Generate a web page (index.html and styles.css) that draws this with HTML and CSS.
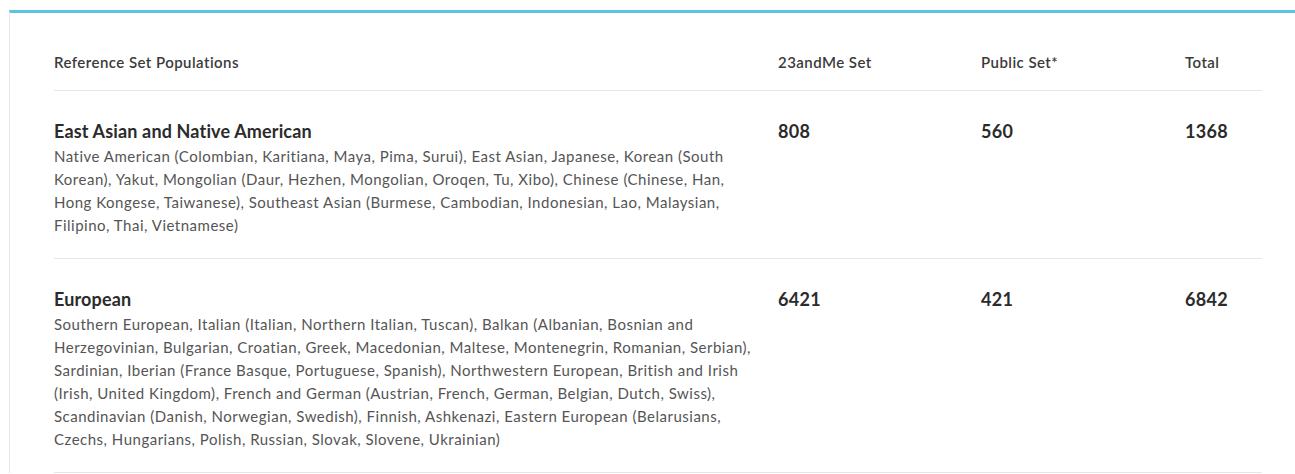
FILE: index.html
```html
<!DOCTYPE html>
<html lang="en">
<head>
    <meta charset="UTF-8">
    <meta name="viewport" content="width=device-width, initial-scale=1.0">
    <title>Reference Set Populations</title>
    <link rel="stylesheet" href="styles.css">
</head>
<body>
    <div class="card">
        <div class="row head">
            <div>Reference Set Populations</div>
            <div>23andMe Set</div>
            <div>Public Set*</div>
            <div>Total</div>
        </div>

        <div class="row">
            <div class="pop">
                <h3>East Asian and Native American</h3>
                <p>Native American (Colombian, Karitiana, Maya, Pima, Surui), East Asian, Japanese, Korean (South Korean), Yakut, Mongolian (Daur, Hezhen, Mongolian, Oroqen, Tu, Xibo), Chinese (Chinese, Han, Hong Kongese, Taiwanese), Southeast Asian (Burmese, Cambodian, Indonesian, Lao, Malaysian, Filipino, Thai, Vietnamese)</p>
            </div>
            <div class="num">808</div>
            <div class="num">560</div>
            <div class="num">1368</div>
        </div>

        <div class="row">
            <div class="pop">
                <h3>European</h3>
                <p>Southern European, Italian (Italian, Northern Italian, Tuscan), Balkan (Albanian, Bosnian and Herzegovinian, Bulgarian, Croatian, Greek, Macedonian, Maltese, Montenegrin, Romanian, Serbian), Sardinian, Iberian (France Basque, Portuguese, Spanish), Northwestern European, British and Irish (Irish, United Kingdom), French and German (Austrian, French, German, Belgian, Dutch, Swiss), Scandinavian (Danish, Norwegian, Swedish), Finnish, Ashkenazi, Eastern European (Belarusians, Czechs, Hungarians, Polish, Russian, Slovak, Slovene, Ukrainian)</p>
            </div>
            <div class="num">6421</div>
            <div class="num">421</div>
            <div class="num">6842</div>
        </div>
    </div>
</body>
</html>
```

FILE: styles.css
```css
body {
    margin: 0;
    background: #fff;
    font-family: Lato, "Open Sans", sans-serif;
    color: #333;
}

.card {
    margin: 10px 0 0 9px;
    padding: 0 33px 0 44px;
    border-top: 3px solid #5bc4e0;
    border-left: 1px solid #e6e6e6;
    background: #fff;
}

.row {
    display: grid;
    grid-template-columns: 724px 203px 204px 1fr;
    padding: 28px 0 21px;
    border-bottom: 1px solid #e6e6e6;
}

.head {
    padding: 39px 0 18px;
    font-size: 15px;
    line-height: 20px;
    font-weight: 600;
    color: #3a3a3a;
    letter-spacing: 0.45px;
}

.pop h3 {
    margin: 0 0 2px;
    font-size: 18px;
    line-height: 24px;
    font-weight: 700;
    color: #2b2b2b;
    letter-spacing: 0.15px;
}

.pop p {
    margin: 0;
    max-width: 705px;
    font-size: 15px;
    line-height: 23px;
    color: #555;
    letter-spacing: 0.5px;
}

.num {
    font-size: 18px;
    line-height: 24px;
    font-weight: 700;
    color: #2b2b2b;
    letter-spacing: 0.3px;
}
```
